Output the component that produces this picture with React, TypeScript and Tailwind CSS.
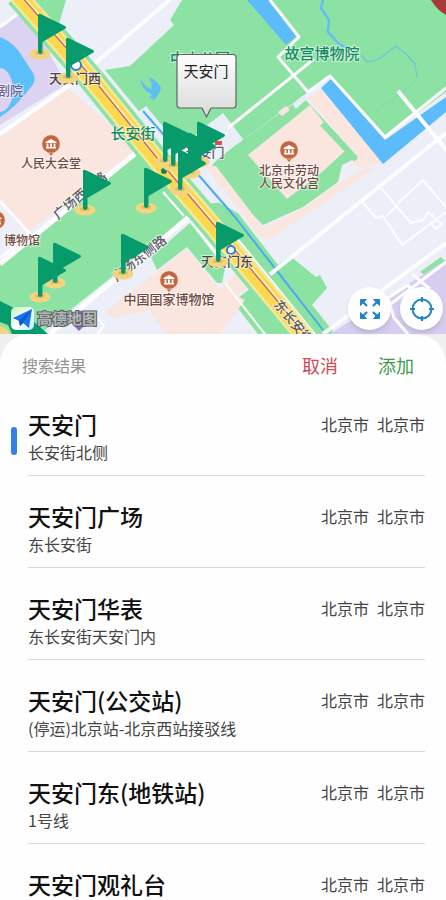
import React, { useState } from 'react';

interface Place {
  name: string;
  address: string;
  province: string;
  city: string;
}

interface MapLabel {
  text: string;
  x: number;
  y: number;
  size: number;
  color: string;
  rotate?: number;
}

const PLACES: Place[] = [
  { name: '天安门', address: '长安街北侧', province: '北京市', city: '北京市' },
  { name: '天安门广场', address: '东长安街', province: '北京市', city: '北京市' },
  { name: '天安门华表', address: '东长安街天安门内', province: '北京市', city: '北京市' },
  { name: '天安门(公交站)', address: '(停运)北京站-北京西站接驳线', province: '北京市', city: '北京市' },
  { name: '天安门东(地铁站)', address: '1号线', province: '北京市', city: '北京市' },
  { name: '天安门观礼台', address: '东长安街', province: '北京市', city: '北京市' },
];

// top-left corner of each flag pole
const FLAGS: [number, number][] = [
  [38, 14],
  [66, 38],
  [197, 122],
  [163, 122],
  [171, 126],
  [188, 133],
  [178, 150],
  [83, 170],
  [144, 168],
  [121, 234],
  [53, 243],
  [38, 257],
  [216, 222],
];

const POIS: [number, number][] = [
  [51, 144],
  [289, 150],
  [169, 280],
  [-4, 220],
];

const LABELS: MapLabel[] = [
  { text: '剧院', x: 10, y: 95, size: 13, color: '#6b6192' },
  { text: '天安门西', x: 75, y: 83, size: 13, color: '#454545' },
  { text: '中山公园', x: 200, y: 64, size: 15, color: '#128a62' },
  { text: '故宫博物院', x: 322, y: 59, size: 15, color: '#128a62' },
  { text: '长安街', x: 133, y: 139, size: 15, color: '#128a62' },
  { text: '天安门', x: 205, y: 157, size: 13, color: '#5c5566' },
  { text: '人民大会堂', x: 51, y: 168, size: 12, color: '#6e4b44' },
  { text: '博物馆', x: 22, y: 245, size: 12, color: '#6e4b44' },
  { text: '北京市劳动', x: 289, y: 175, size: 12, color: '#6e4b44' },
  { text: '人民文化宫', x: 289, y: 188, size: 12, color: '#6e4b44' },
  { text: '中国国家博物馆', x: 169, y: 304, size: 13, color: '#6e4b44' },
  { text: '天安门东', x: 227, y: 266, size: 13, color: '#454545' },
  { text: '广场西侧路', x: 83, y: 199, size: 13, color: '#5a5a62', rotate: -40 },
  { text: '广场东侧路', x: 142, y: 262, size: 13, color: '#5a5a62', rotate: -38 },
  { text: '东长安街', x: 290, y: 325, size: 13, color: '#5a5a62', rotate: 50 },
];

const Flag: React.FC<{ x: number; y: number }> = ({ x, y }) => (
  <g transform={`translate(${x} ${y})`}>
    <path
      d="M0 1.5Q0 -1 2.5 0L27 12Q29 13.5 27 14.8L4.5 28V38Q4.500 40 2.200 40Q0 40 0 38Z"
      fill="#079b6c"
    />
  </g>
);

const FlagBase: React.FC<{ x: number; y: number }> = ({ x, y }) => (
  <g transform={`translate(${x} ${y})`}>
    <ellipse cx="2" cy="40" rx="10.500" ry="5.500" fill="#f3d480" />
    <ellipse cx="2" cy="39" rx="5" ry="2" fill="#e3bd62" />
  </g>
);

const Poi: React.FC<{ x: number; y: number }> = ({ x, y }) => (
  <g transform={`translate(${x} ${y})`}>
    <path d="M-4 7L0 12L4 7Z" fill="#c4663f" />
    <circle r="9.200" fill="#c4663f" stroke="#f7e5dc" strokeWidth="0.6" />
    <path d="M-5.500 -2L0 -5L5.500 -2V-1H-5.500ZM-5 3H5V4.500H-5Z" fill="#fff" />
    <path d="M-3.500 -0.500V3M0 -0.500V3M3.500 -0.500V3" stroke="#fff" strokeWidth="1.800" />
  </g>
);

const MapCanvas: React.FC = () => (
  <svg
    viewBox="0 0 446 334"
    preserveAspectRatio="xMidYMid slice"
    className="block h-full w-full"
    role="img"
    aria-label="地图"
  >
    <defs>
      <linearGradient id="amap" x1="0" y1="0" x2="1" y2="1">
        <stop offset="0" stopColor="#b9f3b4" />
        <stop offset="0.5" stopColor="#ffffff" />
        <stop offset="1" stopColor="#bfe9ff" />
      </linearGradient>
      <linearGradient id="bubble" x1="0" y1="0" x2="0" y2="1">
        <stop offset="0" stopColor="#fdfdfd" />
        <stop offset="1" stopColor="#d8dad9" />
      </linearGradient>
    </defs>
    <rect width="446" height="334" fill="#eceef8" />

    {/* Parks */}
    <g fill="#8ce2a2">
      <path d="M28 0H66L58 27L72 45L66 52Z" />
      <path d="M182 0H446V92L385 137L330 78L308 92L243 140L223 115L206 126L175 152L138 110L105 70L130 66L174 25L170 20Z" />
      <path d="M222 155L243 140L303 97L358 157L342 165L338 182L303 207L263 225L222 184L212 165Z" />
      <path d="M123 165L142 150L190 215L40 334H0V262Z" />
      <path d="M190 223L225 268L222 283H217L187 247L157 270L151 257Z" />
      <path d="M210 198L238 213L278 265L290 256L316 277L320 275L327 288L312 305L333 331L331 334H300L205 220Z" />
      <path d="M233 302L251 288L290 334H258Z" />
      <path d="M420 272L441 257L446 262L425 275Z" />
    </g>

    {/* Buildings and plots */}
    <g fill="#fae6df">
      <path d="M67 88L138 148L28 232L0 202V138Z" />
      <path d="M187 249L217 286L245 300L220 334H165L150 310L115 318L105 312Z" />
      <path d="M216 166L263 228L303 208L340 182L372 165L383 163L321 89L308 98L358 157L350 166L376 168L268 240L258 235L205 166Z" />
      <path d="M248 155L310 105L346 150L322 172L287 199Z" />
      <path d="M278 112L286 106L290 110L282 116Z" />
      <path d="M222 286L236 272L248 287L231 300Z" />
    </g>
    <path d="M293 105L302 96L306 100L296 109Z" fill="#e9edf6" />
    <path d="M206 126L223 113L243 139L222 156Z" fill="#e9edf6" />
    <path d="M322 124L356 160" stroke="#8ce2a2" strokeWidth="5" />
    <path d="M0 28L26 10L66 84L0 125Z" fill="#dcd2f2" />
    <path d="M330 334L446 260V334Z" fill="#d6cdf0" />
    <path d="M133 116L146 106L225 202L205 204Z" fill="#e9eff7" />

    {/* Water */}
    <path d="M0 37Q9 40 18 50L33 73Q37 80 31 87Q15 108 0 117Z" fill="#5cc0fb" />
    <ellipse cx="0" cy="90" rx="13" ry="22" fill="#dcd2f2" />
    <path d="M247 0H268L296 36L286 45Z" fill="#5cbcfb" />
    <path d="M321 88L331 79L385 140L446 97V112L383 164Z" fill="#5cbcfb" />
    <path d="M140 79Q146 88 152 89Q152 83 149 77Q158 81 161 88Q158 97 154 100Q151 98 149 97Q153 96 151 94Q142 90 140 79Z" fill="#5fbff0" />
    <g fill="none" stroke="#64bdf3" strokeLinejoin="round">
      <path d="M323 0L321 8L329 20L328 32L339 44L351 50" strokeWidth="2.500" />
      <path d="M361 55L367 62L379 59L396 46L405 53L415 64L417 78" strokeWidth="1.200" opacity="0.8" />
      <path d="M417 80L395 98L376 110" strokeWidth="1" opacity="0.3" />
      <path d="M143 111L235 217L323 330" strokeWidth="2" stroke="#4aa8f5" />
    </g>

    {/* Side streets */}
    <g fill="none" stroke="#fdfdff" strokeLinejoin="round">
      <path d="M0 27L24 9" strokeWidth="3" />
      <path d="M0 134L67 87L172 -2" strokeWidth="4" />
      <path d="M0 264L142 148" strokeWidth="5" />
      <path d="M0 201L30 234L0 258" strokeWidth="3" />
      <path d="M50 334L190 216" strokeWidth="5" />
      <path d="M163 192L184 216" strokeWidth="2" />
      <path d="M190 218L222 262" strokeWidth="2" />
      <path d="M97 334L104 326L98 318" strokeWidth="2" />
      <path d="M270 0L299 37L278 57L308 92L330 76L385 137L446 88" strokeWidth="3" />
      <path d="M228 128L314 59" strokeWidth="3" />
      <path d="M398 91L446 150" strokeWidth="4" />
      <path d="M263 280L446 133" strokeWidth="4" />
      <path d="M361 200L376 218L383 216L391 228L402 245L446 212" strokeWidth="2" />
      <path d="M380 187L411 223L423 220L428 212L442 224L436 229L430 222M398 203L423 180L446 207M386 216L398 205" strokeWidth="2" />
      <path d="M323 334L446 243" strokeWidth="4" />
      <path d="M394 318L388 298L408 285L417 296M412 274L430 289M394 318L408 334M388 306L446 262" strokeWidth="3" />
    </g>

    {/* Chang'an Avenue */}
    <g fill="none" strokeLinejoin="round">
      <path d="M18 -5L92 80L155 158L213 226L306 338" stroke="#8ce2a2" strokeWidth="26" />
      <path d="M236 237L318 338M225 283L268 338" stroke="#fdfdff" strokeWidth="2" />
      <path d="M18 -5L92 80L155 158L213 226L306 338" stroke="#f4e7a0" strokeWidth="19" />
      <path d="M18 -5L92 80L155 158L213 226L306 338" stroke="#fbd84c" strokeWidth="14" />
      <path d="M21 -5L95 80L158 158L216 226L309 338" stroke="#fff0a6" strokeWidth="4" />
      <path d="M20 -5L94 80L157 158L215 226L308 338" stroke="#c96a62" strokeWidth="1.500" />
    </g>

    <circle cx="76" cy="65" r="5" fill="#fff" stroke="#2f7fd8" strokeWidth="2" />
    <circle cx="231" cy="250" r="4" fill="#fff" stroke="#2f7fd8" strokeWidth="2" />
    <circle cx="164" cy="171" r="3" fill="#07875f" />
    <path d="M215 141H222V145H215Z" fill="#d8524a" />
    <path d="M70 315Q79 306 88 315Q88 323 79 331Q70 323 70 315Z" fill="#8a68cc" />

    {POIS.map(([x, y]) => (
      <Poi key={`${x}-${y}`} x={x} y={y} />
    ))}

    <g textAnchor="middle" fontWeight="500" stroke="#ffffff" strokeOpacity="0.6" strokeWidth="2" paintOrder="stroke">
      {LABELS.map((label) => (
        <text
          key={label.text}
          x={label.x}
          y={label.y}
          fontSize={label.size}
          fill={label.color}
          transform={label.rotate ? `rotate(${label.rotate} ${label.x} ${label.y})` : undefined}
        >
          {label.text}
        </text>
      ))}
    </g>

    {/* Flags, bases first so that they never cover a neighbour */}
    {FLAGS.map(([x, y]) => (
      <FlagBase key={`${x}-${y}`} x={x} y={y} />
    ))}
    {FLAGS.map(([x, y]) => (
      <Flag key={`${x}-${y}`} x={x} y={y} />
    ))}
    <path d="M0 301L14 308L34 322L48 334H12L8 325L0 322Z" fill="#079b6c" />
    <path d="M0 326Q6 326 10 334H0Z" fill="#f3d480" />

    {/* Selected place bubble */}
    <path
      d="M180 54.500H233Q236 54.500 236 57.500V105Q236 108 233 108H211L206.500 117L202 108H180Q177 108 177 105V57.500Q177 54.500 180 54.500Z"
      fill="url(#bubble)"
      stroke="#5f6562"
      strokeWidth="1.200"
    />
    <text x="206" y="77" fontSize="15" textAnchor="middle" fill="#222">
      天安门
    </text>

    {/* Provider logo */}
    <rect x="11" y="307" width="23" height="23" rx="5" fill="url(#amap)" />
    <path d="M13 318L32 309L29 328L23 323L20 326L19 321Z" fill="#1576f2" />
    <path d="M32 309L19 321L20 326L23 323Z" fill="#0b56c9" />
    <text
      x="37"
      y="324"
      fontSize="15"
      fontWeight="700"
      fill="#b4b8ba"
      stroke="#5b605f"
      strokeWidth="2"
      paintOrder="stroke"
    >
      高德地图
    </text>

    <path d="M431 0H446V15Q437 10 431 0Z" fill="#a63a3a" />
  </svg>
);

const ExpandIcon: React.FC = () => (
  <svg viewBox="0 0 20 20" className="size-5" fill="#2186c9" stroke="#2186c9">
    <path d="M0.500 0.500H6.500L0.500 6.500Z" />
    <path d="M19.500 0.500H13.500L19.500 6.500Z" />
    <path d="M0.500 19.500H6.500L0.500 13.500Z" />
    <path d="M19.500 19.500H13.500L19.500 13.500Z" />
    <path d="M2 2L7 7M18 2L13 7M2 18L7 13M18 18L13 13" strokeWidth="2.200" />
  </svg>
);

const LocateIcon: React.FC = () => (
  <svg viewBox="0 0 26 26" className="size-[26px]" fill="none" stroke="#2186c9">
    <circle cx="13" cy="13" r="9.500" strokeWidth="2" />
    <path d="M13 1V6M13 20V25M1 13H6M20 13H25" strokeWidth="2.200" />
  </svg>
);

const App: React.FC = () => {
  const [selected, setSelected] = useState(0);

  return (
    <div className="flex h-screen flex-col overflow-hidden bg-[#efefef] font-['Noto_Sans_CJK_SC',sans-serif]">
      <div className="relative h-[334px] shrink-0">
        <MapCanvas />
        <div className="absolute right-[3px] bottom-1 flex gap-[9px]">
          <button
            type="button"
            aria-label="全屏"
            className="flex size-[43px] items-center justify-center rounded-full bg-white shadow-md"
          >
            <ExpandIcon />
          </button>
          <button
            type="button"
            aria-label="定位"
            className="flex size-[43px] items-center justify-center rounded-full bg-white shadow-md"
          >
            <LocateIcon />
          </button>
        </div>
      </div>

      <section className="flex min-h-0 flex-1 flex-col rounded-t-[30px] bg-[#fefefe]">
        <header className="flex h-[50px] shrink-0 items-center justify-between pt-3 pr-8 pl-[22px]">
          <h1 className="text-base text-[#929292]">搜索结果</h1>
          <div className="flex gap-10 text-lg">
            <button type="button" className="text-[#cf4a55]">
              取消
            </button>
            <button type="button" className="text-[#3f9a4b]">
              添加
            </button>
          </div>
        </header>

        <ul className="min-h-0 flex-1 overflow-y-auto pr-[21px] pl-[11px] [scrollbar-width:none]">
          {PLACES.map((place, index) => (
            <li key={place.name}>
              <button
                type="button"
                onClick={() => setSelected(index)}
                className="flex w-full items-end gap-[11px] pt-[25px] pb-2.5 text-left"
              >
                <span
                  className={`mb-2.5 h-7 w-1.5 shrink-0 rounded-full ${
                    index === selected ? 'bg-[#3380ea]' : 'bg-transparent'
                  }`}
                />
                <span className="flex min-w-0 flex-1 flex-col">
                  <span className="flex items-center justify-between">
                    <span className="text-[23px] leading-[30px] font-medium text-[#111]">{place.name}</span>
                    <span className="flex gap-2 text-base leading-[30px] text-[#444]">
                      <span>{place.province}</span>
                      <span>{place.city}</span>
                    </span>
                  </span>
                  <span className="text-base leading-[26px] text-[#444]">{place.address}</span>
                </span>
              </button>
              <div className="ml-[17px] h-px bg-[#d9dbda]" />
            </li>
          ))}
        </ul>
      </section>
    </div>
  );
};

export default App;
